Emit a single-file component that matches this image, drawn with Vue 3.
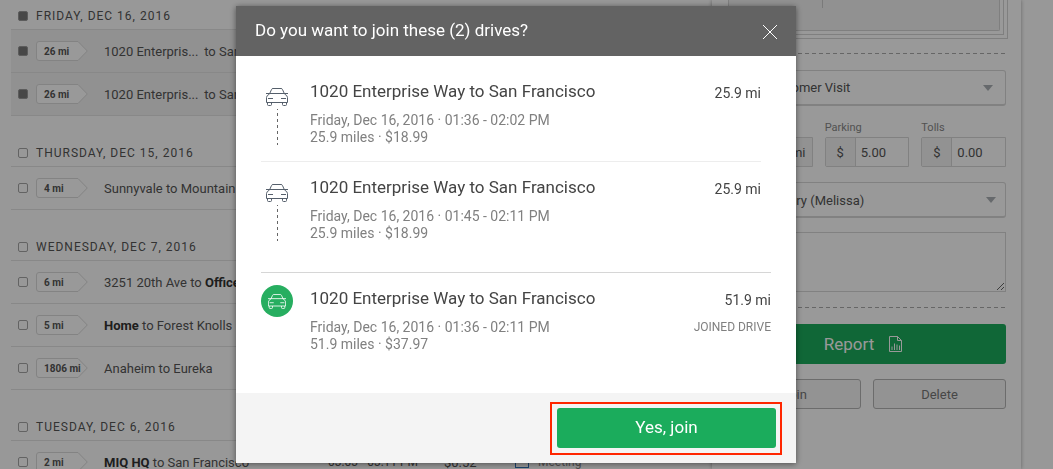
<script setup>
import { ref } from 'vue'

const groups = ref([
  {
    title: 'Friday, Dec 16, 2016',
    checked: true,
    drives: [
      { miles: '26 mi', from: '1020 Enterpris...', to: 'San Francisco', checked: true, short: true },
      { miles: '26 mi', from: '1020 Enterpris...', to: 'San Francisco', checked: true, short: true }
    ]
  },
  {
    title: 'Thursday, Dec 15, 2016',
    checked: false,
    drives: [{ miles: '4 mi', from: 'Sunnyvale', to: 'Mountain View', checked: false }]
  },
  {
    title: 'Wednesday, Dec 7, 2016',
    checked: false,
    drives: [
      { miles: '6 mi', from: '3251 20th Ave', to: 'Office', toNamed: true, checked: false },
      { miles: '5 mi', from: 'Home', fromNamed: true, to: 'Forest Knolls', checked: false },
      { miles: '1806 mi', from: 'Anaheim', to: 'Eureka', checked: false }
    ]
  },
  {
    title: 'Tuesday, Dec 6, 2016',
    checked: false,
    drives: [
      {
        miles: '2 mi', from: 'MIQ HQ', fromNamed: true, to: 'San Francisco', checked: false,
        time: '03:03 - 03:11 PM', value: '$0.52', purpose: 'Meeting'
      }
    ]
  }
])

const parts = [
  { time: 'Friday, Dec 16, 2016 · 01:36 - 02:02 PM', total: '25.9 miles · $18.99', miles: '25.9 mi' },
  { time: 'Friday, Dec 16, 2016 · 01:45 - 02:11 PM', total: '25.9 miles · $18.99', miles: '25.9 mi' }
]

const parking = ref('5.00')
const tolls = ref('0.00')
</script>

<template>
  <div class="page">
    <main class="list">
      <section v-for="group in groups" :key="group.title" class="group">
        <label class="group-head">
          <input v-model="group.checked" type="checkbox" class="check" />
          <span>{{ group.title }}</span>
        </label>
        <ul class="rows">
          <li v-for="(drive, i) in group.drives" :key="i" class="row" :class="{ selected: drive.checked }">
            <input v-model="drive.checked" type="checkbox" class="check" :aria-label="drive.from + ' to ' + drive.to" />
            <span class="tag">
              <svg width="52" height="20" viewBox="0 0 52 20" aria-hidden="true">
                <path d="M3 .5H42L51.300 10 42 19.500H3A2.500 2.500 0 0 1 .5 17V3A2.500 2.500 0 0 1 3 .5Z" />
              </svg>
              <span class="tag-text">{{ drive.miles }}</span>
            </span>
            <span class="route">
              <span :class="{ short: drive.short, named: drive.fromNamed }">{{ drive.from }}</span>
              to <span :class="{ named: drive.toNamed }">{{ drive.to }}</span>
            </span>
            <template v-if="drive.time">
              <span class="time">{{ drive.time }}</span>
              <span>{{ drive.value }}</span>
              <span class="purpose"><i class="purpose-icon"></i>{{ drive.purpose }}</span>
            </template>
          </li>
        </ul>
      </section>
    </main>

    <aside class="panel">
      <div class="map"><div class="map-mid"><div class="map-inner"><i class="road"></i></div></div></div>
      <hr class="dashes" />
      <div class="pick">
        <select aria-label="Purpose"><option>Customer Visit</option></select>
        <svg width="10" height="6" viewBox="0 0 10 6" aria-hidden="true"><path d="M0 0H10L5 6Z" /></svg>
      </div>
      <div class="fields">
        <div class="field">
          <span class="field-label"></span>
          <div class="money"><input type="text" aria-label="Miles" /><span class="unit unit-end">mi</span></div>
        </div>
        <div class="field">
          <label class="field-label" for="parking">Parking</label>
          <div class="money"><span class="unit">$</span><input id="parking" v-model="parking" type="text" /></div>
        </div>
        <div class="field">
          <label class="field-label" for="tolls">Tolls</label>
          <div class="money"><span class="unit">$</span><input id="tolls" v-model="tolls" type="text" /></div>
        </div>
      </div>
      <div class="pick vehicle">
        <select aria-label="Vehicle"><option>Henry (Melissa)</option></select>
        <svg width="10" height="6" viewBox="0 0 10 6" aria-hidden="true"><path d="M0 0H10L5 6Z" /></svg>
      </div>
      <textarea class="notes" aria-label="Notes"></textarea>
      <hr class="dashes" />
      <button type="button" class="report">
        Report
        <svg width="13" height="16" viewBox="0 0 13 16" aria-hidden="true">
          <path d="M.5 .5H8.500L12.500 4.500V15.500H.5ZM8.500 .5V4.500H12.500M3 14V10.500M5.500 14V7.500M8 14V8.500M10.500 14V9.500" />
        </svg>
      </button>
      <div class="pair">
        <button type="button">Join</button>
        <button type="button">Delete</button>
      </div>
    </aside>
  </div>

  <div class="overlay">
    <div class="modal" role="dialog" aria-modal="true" aria-labelledby="join-title">
      <header class="modal-head">
        <h1 id="join-title">Do you want to join these (2) drives?</h1>
        <button type="button" class="close" aria-label="Close">
          <svg width="14" height="14" viewBox="0 0 14 14"><path d="M0 0L14 14M14 0L0 14" /></svg>
        </button>
      </header>
      <div class="modal-body">
        <div class="parts">
          <article v-for="part in parts" :key="part.time" class="drive">
            <div class="marker">
              <svg class="car" width="22" height="18" viewBox="0 0 22 18" aria-hidden="true">
                <path d="M3.500 6L5.500 1.500Q5.800 .5 7 .5H15Q16.200 .5 16.500 1.500L18.500 6M0 5.500H22M3.500 6Q.5 7.500 .5 9.500V14.500H21.500V9.500Q21.500 7.500 18.500 6M2 10.500H7M15 10.500H20M1.500 14.500V16.500Q1.500 17.500 2.500 17.500H4.500Q5.500 17.500 5.500 16.500V14.500M16.500 14.500V16.500Q16.500 17.500 17.500 17.500H19.500Q20.500 17.500 20.500 16.500V14.500" />
              </svg>
              <svg class="trail" width="1" height="36" viewBox="0 0 1 36" aria-hidden="true"><path d="M.5 0V36" /></svg>
            </div>
            <div class="info">
              <h2>1020 Enterprise Way to San Francisco</h2>
              <p>{{ part.time }}<br />{{ part.total }}</p>
            </div>
            <div class="side"><span class="miles">{{ part.miles }}</span></div>
          </article>
        </div>
        <article class="drive joined">
          <div class="marker">
            <span class="badge">
              <svg class="car" width="18" height="15" viewBox="0 0 22 18" aria-hidden="true">
                <path d="M3.500 6L5.500 1.500Q5.800 .5 7 .5H15Q16.200 .5 16.500 1.500L18.500 6M0 5.500H22M3.500 6Q.5 7.500 .5 9.500V14.500H21.500V9.500Q21.500 7.500 18.500 6M2 10.500H7M15 10.500H20M1.500 14.500V16.500Q1.500 17.500 2.500 17.500H4.500Q5.500 17.500 5.500 16.500V14.500M16.500 14.500V16.500Q16.500 17.500 17.500 17.500H19.500Q20.500 17.500 20.500 16.500V14.500" />
              </svg>
            </span>
          </div>
          <div class="info">
            <h2>1020 Enterprise Way to San Francisco</h2>
            <p>Friday, Dec 16, 2016 · 01:36 - 02:11 PM<br />51.9 miles · $37.97</p>
          </div>
          <div class="side"><span class="miles">51.9 mi</span><span class="state">JOINED DRIVE</span></div>
        </article>
      </div>
      <footer class="modal-foot">
        <div class="highlight"><button type="button" class="confirm">Yes, join</button></div>
      </footer>
    </div>
  </div>
</template>

<style>
body {
  overflow: hidden;
  background: #fdfdfd;
}
</style>

<style scoped>
.page,
.overlay {
  box-sizing: border-box;
  height: 100vh;
  overflow: hidden;
  font-family: Roboto, "Liberation Sans", sans-serif;
  font-size: 13px;
  color: #555;
}
.page *,
.overlay * {
  box-sizing: border-box;
}
button,
input,
select,
textarea {
  margin: 0;
  font: inherit;
  color: inherit;
}
.page {
  display: flex;
  padding-right: 32px;
  background: #fefefe;
}
.list {
  flex: 1;
  min-width: 0;
  padding-left: 11px;
}
.group-head {
  display: flex;
  align-items: center;
  gap: 8px;
  height: 51px;
  padding: 23px 0 0 7px;
  border-bottom: 1px solid #e3e3e3;
  font-size: 12px;
  letter-spacing: 1px;
  text-transform: uppercase;
}
.group:first-child .group-head {
  height: 30px;
  padding-top: 2px;
}
.check {
  appearance: none;
  flex: none;
  width: 10px;
  height: 10px;
  border: 1px solid #a5a5a5;
  border-radius: 2px;
}
.check:checked {
  border-color: #999;
  background: #777;
}
.rows {
  margin: 0;
  padding: 0;
  list-style: none;
}
.row {
  display: grid;
  grid-template-columns: 10px 52px 224px 108px 63px 1fr;
  align-items: center;
  column-gap: 8px;
  height: 43px;
  padding-left: 7px;
  border-bottom: 1px solid #e3e3e3;
  white-space: nowrap;
}
.selected {
  background: #f2f2f2;
}
.tag {
  display: grid;
  align-items: center;
}
.tag > * {
  grid-area: 1 / 1;
}
.tag path {
  fill: #fff;
  stroke: #dadada;
}
.tag-text {
  padding-left: 8px;
  font-size: 10px;
  font-weight: 700;
}
.route {
  padding-left: 8px;
}
.short {
  display: inline-block;
  width: 97px;
}
.named {
  font-weight: 700;
  color: #333;
}
.time,
.purpose {
  font-size: 12px;
}
.purpose {
  display: flex;
  align-items: center;
  gap: 9px;
  color: #888;
}
.purpose-icon {
  width: 14px;
  height: 11px;
  border: 1px solid #2f6fb5;
}
.panel {
  display: flex;
  flex-direction: column;
  width: 309px;
  padding: 0 15px 0 16px;
  background: #fff;
  box-shadow: 0 0 4px rgba(0, 0, 0, 0.35);
}
.map,
.map-mid,
.map-inner {
  border: 1px solid #d4d4d4;
  border-top: 0;
}
.map {
  height: 39px;
  margin-right: -2px;
  padding: 0 3px 3px 0;
  border-left: 0;
}
.map-mid {
  height: 35px;
  padding: 0 3px 3px 0;
  border-left: 0;
}
.map-inner {
  height: 31px;
  padding-left: 93px;
  border-radius: 0 0 2px 2px;
  background: #f2f2f2;
}
.road {
  display: block;
  width: 1px;
  height: 8px;
  background: #ccc;
}
.dashes {
  width: 100%;
  height: 1px;
  margin: 14px 0 16px;
  border: 0;
  background: repeating-linear-gradient(90deg, #aaa 0 4px, transparent 4px 7px);
}
.pick {
  display: grid;
  align-items: center;
}
.pick > * {
  grid-area: 1 / 1;
}
.pick select {
  appearance: none;
  width: 100%;
  height: 36px;
  padding: 0 30px 0 36px;
  border: 1px solid #d8d8d8;
  border-bottom-width: 2px;
  border-radius: 3px;
  background: #fff;
}
.pick svg {
  justify-self: end;
  margin-right: 13px;
  fill: #abb0b5;
  pointer-events: none;
}
.fields {
  display: grid;
  grid-template-columns: repeat(3, 1fr);
  gap: 12px;
  margin: 13px 0 15px;
}
.field-label {
  display: block;
  height: 18px;
  font-size: 11px;
  line-height: 18px;
  color: #888;
}
.money {
  display: flex;
  height: 30px;
  border: 1px solid #d8d8d8;
  border-radius: 2px 0 0 2px;
}
.money input {
  flex: 1;
  width: 0;
  padding: 0 5px;
  border: 0;
  background: #fff;
}
.unit {
  display: grid;
  place-items: center;
  width: 30px;
  border-right: 1px solid #d8d8d8;
  background: #f4f4f4;
}
.unit-end {
  width: 28px;
  border-right: 0;
  border-left: 1px solid #d8d8d8;
}
.pick.vehicle select {
  padding: 2px 30px 0 44px;
}
.vehicle svg {
  margin-right: 10px;
}
.notes {
  width: 100%;
  height: 60px;
  margin: 14px 0 1px;
  border: 1px solid #d8d8d8;
  background: #fff;
  resize: vertical;
}
.report {
  display: flex;
  align-items: center;
  justify-content: center;
  gap: 15px;
  height: 40px;
  padding: 0 8px 0 0;
  border: 0;
  border-radius: 3px;
  background: #1bac5c;
  color: #fff;
  font-size: 17px;
}
.report svg {
  fill: none;
  stroke: #fff;
}
.pair {
  display: grid;
  grid-template-columns: 1fr 1fr;
  gap: 12px;
  margin-top: 15px;
}
.pair button {
  height: 30px;
  border: 1px solid #b4b4b4;
  border-radius: 3px;
  background: #f5f5f5;
  color: #777;
}
.overlay {
  position: fixed;
  inset: 0;
  padding: 6px 21px 6px 0;
  background: rgba(0, 0, 0, 0.4);
}
.modal {
  width: 560px;
  max-width: 100%;
  margin: 0 auto;
  background: #fff;
  box-shadow: 0 1px 6px rgba(0, 0, 0, 0.5);
}
.modal-head {
  display: flex;
  align-items: center;
  justify-content: space-between;
  height: 50px;
  padding: 0 19px 2px;
  background: #636363;
  color: #fff;
}
h1,
h2,
p {
  margin: 0;
  font-weight: 400;
}
h1 {
  font-size: 17px;
}
.close {
  display: grid;
  height: 18px;
  padding: 4px 0 0;
  border: 0;
  background: none;
}
.close path {
  stroke: #fff;
}
.modal-body {
  padding: 10px 25px 32px;
}
.parts {
  margin-right: 10px;
  padding-bottom: 14px;
}
.drive {
  display: grid;
  grid-template-columns: 32px 1fr auto;
  column-gap: 17px;
  height: 96px;
  padding-top: 16px;
}
.parts .drive:first-child {
  border-bottom: 1px solid #ededed;
}
.joined {
  height: 89px;
  border-top: 1px solid #d6d6d6;
}
.marker {
  display: flex;
  flex-direction: column;
  align-items: center;
  gap: 3px;
  padding-top: 6px;
}
.joined .marker {
  padding-top: 0;
  margin-top: -4px;
}
.car {
  flex: none;
  fill: none;
  stroke: #555f6b;
}
.trail path {
  stroke: #666;
  stroke-dasharray: 3 3;
  stroke-dashoffset: 2;
}
.badge {
  display: grid;
  place-items: center;
  width: 32px;
  height: 32px;
  border-radius: 50%;
  background: #27ae60;
}
.badge .car {
  stroke: #fff;
}
h2 {
  font-size: 17px;
  line-height: 18px;
  color: #444;
}
.info p {
  margin-top: 12px;
  font-size: 14px;
  line-height: 17px;
  color: #808080;
}
.side {
  display: flex;
  flex-direction: column;
  align-items: flex-end;
  gap: 8px;
  color: #444;
}
.miles {
  font-size: 14px;
  line-height: 22px;
}
.state {
  font-size: 12px;
  line-height: 17px;
  color: #808080;
}
.modal-foot {
  display: flex;
  justify-content: flex-end;
  padding: 9px 14px 8px;
  background: #f4f4f4;
}
.highlight {
  padding: 4px 4px 5px 5px;
  border: 2px solid #ff2600;
}
.confirm {
  display: block;
  width: 219px;
  height: 40px;
  padding: 0 6px 2px;
  border: 0;
  border-radius: 3px;
  background: #1bac5c;
  color: #fff;
  font-size: 17px;
}
</style>
